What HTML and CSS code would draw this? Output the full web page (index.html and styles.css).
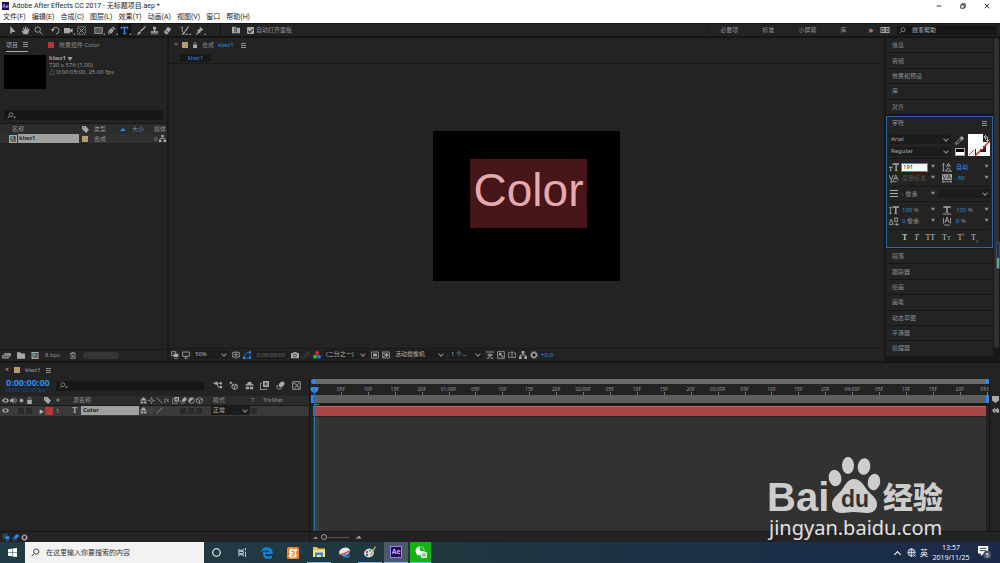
FILE: index.html
```html
<!DOCTYPE html>
<html lang="zh-CN">
<head>
<meta charset="utf-8">
<title>Adobe After Effects CC 2017</title>
<link rel="stylesheet" href="styles.css">
</head>
<body>
<svg class="sprite" aria-hidden="true">
  <symbol id="arrow" viewBox="0 0 12 12"><path d="M3 0v11l3-3h4z" fill="currentColor"/></symbol>
  <symbol id="hand" viewBox="0 0 12 12"><path d="M3.5 11 0.8 6.6l1-.8L4 7.4 2.6 2.5l1-.4L5 5.6 5.2.8h1.2l.3 4.6L8.2 1.3l1 .3L8.5 6l2-2.6 1 .6L9 11z" fill="currentColor"/></symbol>
  <symbol id="zoom" viewBox="0 0 12 12"><circle cx="5" cy="4.8" r="3.6" class="ln"/><path d="m7.6 7.6 3.6 3.6" class="ln"/></symbol>
  <symbol id="rotate" viewBox="0 0 12 12"><path d="M2 5.5A4.4 4.4 0 1 1 6.5 10.500" class="ln"/><path d="M0 4h5L2 7.500z" fill="currentColor"/></symbol>
  <symbol id="video" viewBox="0 0 12 12"><path d="M0 2.500h8v2.500l3.500-2v6L8 7v2.500H0z" fill="currentColor"/></symbol>
  <symbol id="pan" viewBox="0 0 12 12"><rect x="1" y="1" width="10" height="10" class="ln" stroke-dasharray="2 1.300"/><path d="m3 3 6 6M9 3 3 9" class="ln"/></symbol>
  <symbol id="rect" viewBox="0 0 12 12"><rect x="1" y="2" width="10" height="8" fill="#555" stroke="currentColor"/></symbol>
  <symbol id="pen" viewBox="0 0 12 12"><path d="m1 11 1.500-5.500L6 2.800 9 5.700 6.500 9.300zM6.700 2 8 .7l3.200 3L9.800 5z" fill="currentColor"/><path d="m1.500 10.500 4-4" stroke="#222" stroke-width=".8"/></symbol>
  <symbol id="type" viewBox="0 0 12 12"><path d="M1 1h10v3H9.500L9 2.600H7v7.200h1.500V11h-5V9.800H5V2.600H3L2.500 4H1z" fill="currentColor"/></symbol>
  <symbol id="brush" viewBox="0 0 12 12"><path d="M11 0 4 6.200l1.500 1.600L12 1zM3.500 7c2 .6 1.800 2.600.4 3.500S.8 11.500 0 11c1.500-.6.800-3.200 3.500-4z" fill="currentColor"/></symbol>
  <symbol id="stamp" viewBox="0 0 12 12"><path d="M4 1h4v3L7 5v2h4v2H1V7h4V5L4 4zM1 10h10v1H1z" fill="currentColor"/></symbol>
  <symbol id="eraser" viewBox="0 0 12 12"><path d="m1 8 5.500-7L11 4 6 11H4z" fill="currentColor"/><path d="m3 5.500 4.500 3.500" stroke="#222"/></symbol>
  <symbol id="roto" viewBox="0 0 12 12"><path d="m1 3 2-2v7" class="ln"/><path d="M11 0 6 6.500l1.500 1L12 1zM5.500 7 2 11.500c2 .5 4-1 5-3z" fill="currentColor"/><path d="M7 11h4" class="ln"/></symbol>
  <symbol id="pin" viewBox="0 0 12 12"><path d="m6.500 1 4.500 4-1 1-1-.2L7 8v2L5.500 9 2 11.500 1 11l3-3.500L2.500 5.500 5 5l1.500-2z" fill="currentColor"/></symbol>
  <symbol id="folderfx" viewBox="0 0 12 12"><path d="M0 1h5l1 1.500h6V11H0z" fill="currentColor"/><path d="M3 4h1.500v5H3m5-5H6.500v5H8" fill="none" stroke="#222"/></symbol>
  <symbol id="search" viewBox="0 0 12 12"><circle cx="7" cy="4.700" r="3.500" class="ln"/><path d="M4.500 7.300 1 11" class="ln"/></symbol>
  <symbol id="searchmenu" viewBox="0 0 16 12"><circle cx="7" cy="4.700" r="3.500" class="ln"/><path d="M4.500 7.300 1 11" class="ln"/><path d="M11 8h5l-2.500 3z" fill="currentColor"/></symbol>
  <symbol id="ws" viewBox="0 0 12 8"><path d="M0 0h12v8H0z" fill="currentColor"/><path d="M1.500 2h3v4h-3zM7 2h3.500M7 6h3.500M10 2v4M7 4h2" fill="none" stroke="#222"/></symbol>
  <symbol id="lock" viewBox="0 0 12 12"><path d="M2 5h8v7H2z" fill="currentColor"/><path d="M3.800 5V3a2.200 2.200 0 0 1 4.400 0v2" class="ln"/></symbol>
  <symbol id="tag" viewBox="0 0 12 12"><path d="M0 0h6l6 6.500L7 12 0 5z" fill="currentColor"/><circle cx="3" cy="3" r="1" fill="#333"/></symbol>
  <symbol id="comp" viewBox="0 0 12 12"><path d="M0 0h12v12H0z" fill="#aaa"/><path d="M2 2h8v8H2z" fill="#333"/><circle cx="5" cy="4.500" r="2.200" fill="#52a9c8"/><circle cx="7.500" cy="7.500" r="2" fill="#c75151"/><path d="M2 7h3v3H2z" fill="#62a05a"/></symbol>
  <symbol id="tree" viewBox="0 0 12 12"><path d="M4 0h4v4H4zM0 8h4v4H0zM8 8h4v4H8z" fill="currentColor"/><path d="M6 4v2M2 8V6h8v2" class="ln"/></symbol>
  <symbol id="footage" viewBox="0 0 14 10"><path d="M3 1h11v6H3zM0 4h11v6H0z" fill="currentColor" stroke="#222" stroke-width=".7"/><path d="M2 7h7" stroke="#222"/></symbol>
  <symbol id="folder" viewBox="0 0 12 10"><path d="M0 0h5l1 2h6v8H0z" fill="currentColor"/></symbol>
  <symbol id="trash" viewBox="0 0 12 12"><path d="M1 2.500h10M4 2V.7h4V2M2.500 3v8.300h7V3M5 5v4.500M7 5v4.500" class="ln"/></symbol>
  <symbol id="layers" viewBox="0 0 12 12"><path d="M1 1h6v6H1z" class="ln"/><path d="M4 4h7v5H4z" fill="currentColor"/><path d="M5 11h5" class="ln"/></symbol>
  <symbol id="monitor" viewBox="0 0 12 12"><path d="M1 1.500h10v6.500H1zM6 8v2.500M3.500 11h5" class="ln"/></symbol>
  <symbol id="grid" viewBox="0 0 12 12"><path d="M5 9H1V2h4M7 2h4v7H7M6 0v12M3 5.500h6" class="ln"/></symbol>
  <symbol id="mask" viewBox="0 0 12 12"><path d="M2 10.500C1 6 4 2.500 10.500 2v8.500z" class="ln"/><path d="M0 9h3v3H0zM9 9h3v3H9zM9 .5h3v3H9z" fill="currentColor"/></symbol>
  <symbol id="camera" viewBox="0 0 12 12"><path d="M0 3h3l1-1.500h4L9 3h3v8H0z" fill="currentColor"/><circle cx="6" cy="6.700" r="2.200" fill="none" stroke="#222"/></symbol>
  <symbol id="link" viewBox="0 0 12 12"><path d="M1 8a2 2 0 0 0 4 1l1-3M6 6l1-3a2 2 0 0 1 4 1L9 8" class="ln"/></symbol>
  <symbol id="rgb" viewBox="0 0 12 12"><circle cx="6" cy="3" r="3" fill="#e22"/><circle cx="3" cy="8.500" r="3" fill="#2b3"/><circle cx="9" cy="8.500" r="3" fill="#36f"/></symbol>
  <symbol id="roi" viewBox="0 0 12 12"><path d="M.5 1.500h11v9H.5z" class="ln"/><path d="M3 4h6v4H3z" fill="currentColor"/></symbol>
  <symbol id="checker" viewBox="0 0 12 12"><path d="M.5 1.500h11v9H.5z" class="ln"/><path d="M2 3h2v2h2V3h2v2h2v2H8v2H6V7H4v2H2V7h2V5H2z" fill="currentColor"/></symbol>
  <symbol id="align" viewBox="0 0 12 12"><path d="M0 1.500h12M3 5h6v2H3zM1 11h3m4 0h3M4 11l1-3m3 3L7 8" class="ln"/></symbol>
  <symbol id="fast" viewBox="0 0 12 12"><path d="M1 1h10v10H1z" class="ln"/><path d="M3 3h4L6 5l4 4-1 1-4-4-2 1z" fill="currentColor"/></symbol>
  <symbol id="share" viewBox="0 0 12 12"><path d="M3 3H.5v6.500h11V3H9M6 8V1M4 3l2-2 2 2" class="ln"/></symbol>
  <symbol id="gear" viewBox="0 0 12 12"><circle cx="6" cy="6" r="3.500" fill="none" stroke="currentColor" stroke-width="2"/><circle cx="6" cy="6" r="5" fill="none" stroke="currentColor" stroke-width="1.500" stroke-dasharray="2 1.900"/></symbol>
  <symbol id="flow" viewBox="0 0 12 12"><path d="M0 3h5M5 3l2 5h4M5 3h6" class="ln"/><path d="M3 1h3v4H3zM9 1.500h3v3H9zM9 6.500h3v3H9z" fill="currentColor"/></symbol>
  <symbol id="draft" viewBox="0 0 12 12"><path d="m7.500 4 3.500 1.500v4L7.500 11.500 4 9.500v-4zM4 5.500 7.500 7 11 5.500M7.500 7v4" class="ln"/><path d="m2.500 0 .8 1.700L5 2.500l-1.700.8L2.500 5l-.8-1.700L0 2.500l1.700-.8z" fill="currentColor"/></symbol>
  <symbol id="shy" viewBox="0 0 12 12"><path d="M0 6c0-1 2-1.500 3-2 0-4 6-4 6 0 1 .5 3 1 3 2zM1 7.500h4.500v3.500H1zM6.500 7.500H11v3.500H6.500z" fill="currentColor"/></symbol>
  <symbol id="blend" viewBox="0 0 12 12"><path d="M4 0h8v8H4z" fill="currentColor"/><path d="M2.500 3H.5v8.500h8V9.500" class="ln"/><path d="M6 2h4v4H6z" fill="#555"/></symbol>
  <symbol id="blur" viewBox="0 0 12 12"><ellipse cx="7.500" cy="4.500" rx="4.400" ry="3" transform="rotate(-45 7.500 4.500)" fill="currentColor"/><path d="M2.500 5c-2 2-2 5 .5 5.500S7 10 8.500 9" class="ln"/></symbol>
  <symbol id="graph" viewBox="0 0 12 12"><path d="M1 1h10v10H1zM2 3c5 0 4 6 9 7M3 10 9 3" class="ln"/></symbol>
  <symbol id="eye" viewBox="0 0 12 12"><path d="M0 6c3-5 9-5 12 0-3 5-9 5-12 0z" fill="currentColor"/><circle cx="6" cy="6" r="2.200" fill="#222"/></symbol>
  <symbol id="speaker" viewBox="0 0 12 12"><path d="M0 4h2.500L6 1v10L2.500 8H0z" fill="currentColor"/><path d="M7.500 3.500q2 2.500 0 5M9.500 1.500q3.500 4.500 0 9" class="ln"/></symbol>
  <symbol id="dot" viewBox="0 0 12 12"><circle cx="6" cy="6" r="3.200" fill="currentColor"/></symbol>
  <symbol id="sun" viewBox="0 0 12 12"><circle cx="6" cy="6" r="2.500" class="ln"/><path d="M6 0v2.500M6 9.500V12M0 6h2.500M9.500 6H12" class="ln"/></symbol>
  <symbol id="slash" viewBox="0 0 12 12"><path d="m1 11 10-10" class="ln"/></symbol>
  <symbol id="back" viewBox="0 0 12 12"><path d="m1 1 10 10" class="ln"/></symbol>
  <symbol id="half" viewBox="0 0 12 12"><circle cx="6" cy="6" r="5" class="ln"/><path d="M2.500 9.500A5 5 0 0 1 9.500 2.500z" fill="currentColor"/></symbol>
  <symbol id="cube" viewBox="0 0 12 12"><path d="m6 .7 5 2.500v5.600l-5 2.500-5-2.500V3.200zM1 3.200l5 2.600 5-2.600M6 5.800v5.500" class="ln"/></symbol>
  <symbol id="dropper" viewBox="0 0 12 12"><path d="m1 11 .5-2.500 5-5 2 2-5 5z" class="ln"/><path d="m6 2 1-.5L9 0l3 3-1.500 2-.5 1z" fill="currentColor"/></symbol>
  <symbol id="size" viewBox="0 0 14 12"><path d="M5 0h9v3h-1V2h-2v8h1v1H8v-1h1V2H6v1H5zM0 5h5v2H4V6.500H3V10h1v1H1v-1h1V6.500H1V7H0z" fill="currentColor"/></symbol>
  <symbol id="leading" viewBox="0 0 14 12"><path d="M2 0v11M.5 2 2 .5 3.500 2M.5 9.500 2 11l1.500-1.500M6 5l3-5 3 5M7 3.500h4M5 11.500l3.500-5.500 4 5.500M5 11h9" class="ln"/></symbol>
  <symbol id="kern" viewBox="0 0 14 12"><path d="m0 1 3 7 3-7M6 9l3.500-8L13 9M7.500 6h4M3 10.500h8M4 9l-2 1.500L4 12" class="ln"/></symbol>
  <symbol id="track" viewBox="0 0 14 12"><path d="M0 0h14v8H0z" fill="currentColor"/><path d="m1 1 2.500 6L6 1m1 6 2.500-6L13 7M8 5h4" fill="none" stroke="#222"/><path d="M0 10.500h14M2 9l-2 1.500L2 12m10-3 2 1.500-2 1.500" class="ln"/></symbol>
  <symbol id="vscale" viewBox="0 0 14 12"><path d="M5 0h9v3h-1V2h-2.500v8h1v1h-4v-1h1V2H6v1H5z" fill="currentColor"/><path d="M2 1v10M.5 2.500 2 1l1.500 1.500M.5 9.500 2 11l1.500-1.500" class="ln"/></symbol>
  <symbol id="hscale" viewBox="0 0 14 12"><path d="M2 0h10v3h-1V2H8v6h1v1H5V8h1V2H3v1H2z" fill="currentColor"/><path d="M1 11h12" class="ln"/></symbol>
  <symbol id="bshift" viewBox="0 0 14 12"><path d="m0 10 3-7 3 7zM8 6V1h4v5zM8 10h6M11 8v4" class="ln"/></symbol>
  <symbol id="tsume" viewBox="0 0 14 12"><path d="M4 8 7 0l3 8M5 5h4M2 1v8M12 1v8M3 11h8" class="ln"/></symbol>
  <symbol id="win" viewBox="0 0 12 12"><path d="m0 1.700 5.300-.8v4.800H0zM6 .8 12 0v5.700H6zM0 6.300h5.300v4.800L0 10.300zM6 6.300h6V12l-6-.8z" fill="#fff"/></symbol>
  <symbol id="task" viewBox="0 0 12 12"><path d="M1 1v2h6V1M1 11V9h6v2M1 4.500h6v3H1zM10 0v3M10 5v7" class="ln"/></symbol>
  <symbol id="edge" viewBox="0 0 12 12"><path d="M0 6C.5 2 3 .3 6.200.3 10 .3 12 3 11.700 7H4c.2 3 4.500 3 7 1.500v2.500c-4.500 2-9 .5-9-4C2 5 3.500 3.500 5 3 2.500 3 1 4.500 0 6zm4-.8h4.500C8.300 2.500 4.500 2.700 4 5.200z" fill="#1684dd"/></symbol>
  <symbol id="uc" viewBox="0 0 12 12"><rect width="12" height="12" rx="1.500" fill="#f5821f"/><path d="M3 3.500C2 2 4 1 5.500 2S9 1 10 2.500 8.500 4 9 6s1.500 4-1 4.500-5 .5-6-1 1-1.500.5-3.500S2 4.500 3 3.500z" fill="#fff"/><path d="M4 4.500c2-1 3 0 3.500 1S6 7 5 6.500M4 8.500c1.500.5 2.500.5 3.500-.5" stroke="#f5821f" stroke-width="1.200" fill="none"/></symbol>
  <symbol id="explorer" viewBox="0 0 12 12"><path d="M0 1h4l1 1.500h7V11H0z" fill="#f5bf4d"/><path d="M0 4h12v7H0z" fill="#ffe08a"/><path d="M2 6.500h8V11H8V9H4v2H2z" fill="#3b8cca"/></symbol>
  <symbol id="snip" viewBox="0 0 12 12"><ellipse cx="6.500" cy="4.500" rx="5.500" ry="3.800" fill="#ebe7e6" transform="rotate(-20 6.500 4.500)"/><path d="M1 7.500Q6 8 11 4" fill="none" stroke="#c33" stroke-width="1.300"/><path d="m5.500 7 4 3.500M9 7l-3.500 3.500" stroke="#4a8cc4" stroke-width="1.300"/><circle cx="10" cy="8.500" r="1.500" fill="none" stroke="#4a8cc4"/></symbol>
  <symbol id="paint" viewBox="0 0 12 12"><ellipse cx="5" cy="7" rx="5" ry="4.300" fill="#d8e4ea" transform="rotate(-20 5 7)"/><circle cx="3" cy="6" r="1.200" fill="#d34"/><circle cx="6" cy="4.700" r="1.100" fill="#3a5"/><circle cx="3" cy="9" r="1.200" fill="#36c"/><path d="m11 0 1 1-5 9-1-1z" fill="#d79a45"/></symbol>
  <symbol id="wechat" viewBox="0 0 12 12"><circle cx="5" cy="5" r="4.500" fill="#fff"/><path d="M5 5V1a4 4 0 0 1 4 4z" fill="#10bd12"/><rect x="6" y="6" width="6" height="6" rx="1" fill="#e8f4e8"/><path d="M8 7.500v3M10 7.500v3" stroke="#2a9b2a"/></symbol>
  <symbol id="globe" viewBox="0 0 12 12"><g fill="none" stroke="currentColor" stroke-width=".9"><circle cx="6" cy="6" r="5"/><path d="M1 6h10M6 1v10"/><ellipse cx="6" cy="6" rx="2.500" ry="5"/></g><path d="M7.500 7.500H12V12H7.500z" fill="#1c2c46"/><path d="m8 8 3.500 3.500M11.500 8 8 11.500" stroke="currentColor" stroke-width=".9"/></symbol>
  <symbol id="note" viewBox="0 0 14 14"><path d="M0 0h11v8H6l-3 3V8H0z" fill="#fff"/><path d="M2 2.500h7M2 5h7" stroke="#1c2c46"/><circle cx="10" cy="9.500" r="4.300" fill="#4a566b"/></symbol>
  <symbol id="mount" viewBox="0 0 12 8"><path d="m0 7 3-3 1 1 3-4 5 6z" fill="currentColor"/></symbol>
  <symbol id="keys" viewBox="0 0 12 12"><path d="m0 6 5-5v3h3V1l4 3v6H8V8H5v3z" fill="currentColor"/><path d="m3 6 2-1v2z" fill="#222"/></symbol>
</svg>

<header>
  <div class="titlebar">
    <span class="ae-logo">Ae</span>
    <span class="title">Adobe After Effects CC 2017 - 无标题项目.aep *</span>
    <div class="winbtns">
      <button aria-label="最小化"><svg viewBox="0 0 8 8"><path d="M1 4h6" class="ln"/></svg></button>
      <button aria-label="还原"><svg viewBox="0 0 8 8"><path d="M1 2.500h4.500V7H1zM2.500 2.500V1H7v4.500H5.500" class="ln"/></svg></button>
      <button aria-label="关闭"><svg viewBox="0 0 8 8"><path d="m1 1 6 6M7 1 1 7" class="ln"/></svg></button>
    </div>
  </div>
  <nav class="menubar">
    <button>文件(F)</button><button>编辑(E)</button><button>合成(C)</button><button>图层(L)</button><button>效果(T)</button><button>动画(A)</button><button>视图(V)</button><button>窗口</button><button>帮助(H)</button>
  </nav>
</header>

<div class="toolbar">
  <div class="tools"><button aria-label="选取"><svg><use href="#arrow"/></svg></button><button aria-label="手形"><svg><use href="#hand"/></svg></button><button aria-label="缩放"><svg><use href="#zoom"/></svg></button></div>
  <div class="tools"><button aria-label="旋转"><svg><use href="#rotate"/></svg></button><button class="more" aria-label="摄像机"><svg><use href="#video"/></svg></button><button aria-label="锚点"><svg><use href="#pan"/></svg></button></div>
  <div class="tools"><button class="more" aria-label="矩形"><svg><use href="#rect"/></svg></button><button class="more" aria-label="钢笔"><svg><use href="#pen"/></svg></button><button class="more active" aria-label="文字"><svg><use href="#type"/></svg></button></div>
  <div class="tools"><button aria-label="画笔"><svg><use href="#brush"/></svg></button><button aria-label="图章"><svg><use href="#stamp"/></svg></button><button aria-label="橡皮擦"><svg><use href="#eraser"/></svg></button></div>
  <div class="tools wide"><button class="more" aria-label="Roto"><svg><use href="#roto"/></svg></button><button class="more" aria-label="操控点"><svg><use href="#pin"/></svg></button></div>
  <div class="panel-toggle"><svg><use href="#folderfx"/></svg><label><input type="checkbox" checked>自动打开面板</label></div>
  <div class="workspaces"><button>必要项</button><button>标准</button><button>小屏幕</button><button>库</button><button class="bright">»</button></div>
  <svg class="ws"><use href="#ws"/></svg>
  <div class="help"><svg><use href="#search"/></svg><input type="text" placeholder="搜索帮助" aria-label="搜索帮助"></div>
</div>

<main class="main">
  <section class="project">
    <div class="tabs"><button class="tab on">项目 <i class="burger"></i></button><button class="tab"><i class="sq red"></i>效果控件 Color</button></div>
    <div class="info"><div class="thumb"></div><div><b>klwz1 <small>▼</small></b><p>720 x 576 (1.00)</p><p>△ 0:00:05:00, 25.00 fps</p></div></div>
    <div class="search"><svg><use href="#searchmenu"/></svg><input type="text" aria-label="搜索项目"></div>
    <div class="files">
      <div class="frow fhead"><span class="fname">名称</span><svg><use href="#tag"/></svg><span>类型</span><i class="up"></i><span>大小</span><span>媒体</span></div>
      <div class="frow fsel"><svg class="ci"><use href="#comp"/></svg><span class="sel">klwz1</span><i class="sq tan"></i><span>合成</span><i></i><span></span><span class="zero">0<svg><use href="#tree"/></svg></span></div>
    </div>
    <div class="pfoot"><svg class="w"><use href="#footage"/></svg><svg><use href="#folder"/></svg><svg><use href="#comp"/></svg><span>8 bpc</span><svg><use href="#trash"/></svg><i class="thumbbar"></i></div>
  </section>

  <section class="viewer">
    <div class="tabs vtabs"><span class="x">×</span><i class="sq tan"></i><svg><use href="#lock"/></svg><span>合成</span><span class="blue">klwz1</span><i class="burger"></i></div>
    <div class="crumb"><button>klwz1</button></div>
    <div class="stage"><div class="frame"><div class="textlayer">Color</div></div></div>
    <div class="vfoot">
      <svg><use href="#layers"/></svg><svg><use href="#monitor"/></svg>
      <label class="sel-wrap zoomsel"><select aria-label="放大率"><option>50%</option></select></label>
      <svg><use href="#grid"/></svg><svg class="blue"><use href="#mask"/></svg>
      <span class="tc">0:00:00:00</span>
      <svg><use href="#camera"/></svg><svg class="dim"><use href="#link"/></svg><svg><use href="#rgb"/></svg>
      <label class="sel-wrap res"><select aria-label="分辨率"><option>(二分之一)</option></select></label>
      <svg><use href="#roi"/></svg><svg><use href="#checker"/></svg>
      <label class="sel-wrap cam"><select aria-label="视图"><option>活动摄像机</option></select></label>
      <label class="sel-wrap cnt"><select aria-label="视图布局"><option>1 个...</option></select></label>
      <svg><use href="#align"/></svg><svg><use href="#fast"/></svg><svg><use href="#share"/></svg><svg><use href="#tree"/></svg><svg><use href="#gear"/></svg>
      <span class="blue">+0.0</span>
    </div>
  </section>

  <aside class="side">
    <div class="stack">
      <button class="acc">信息</button><button class="acc">音频</button><button class="acc">效果和预设</button><button class="acc">库</button><button class="acc">对齐</button>
      <div class="char">
        <div class="chead"><span>字符</span><i class="burger"></i></div>
        <div class="fonts">
          <div class="fsels">
            <label class="sel-wrap"><select aria-label="字体"><option>Arial</option></select></label>
            <label class="sel-wrap"><select aria-label="样式"><option>Regular</option></select></label>
          </div>
          <div class="pick"><svg><use href="#dropper"/></svg><i class="bw"></i></div>
          <svg class="swatch" viewBox="0 0 22 22"><path d="M8 8h14v14H8z" fill="#fff"/><path d="M12 12h6v6h-6z" fill="#222"/><path d="M0 15h7v7H0z" fill="#fff"/><path d="m1 21 5-5" stroke="#d33"/><path d="M7 22 22 7" stroke="#d22" stroke-width="1.500"/><path d="M0 0h15v15H0z" fill="#fff"/><path d="M16 3h3.500v4M18 1l-2 2 2 2M17.500 5.500l2 2 2-2" fill="none" stroke="#bbb"/></svg>
        </div>
        <div class="props">
          <svg><use href="#size"/></svg><input type="text" value="191" aria-label="字体大小"><b>▼</b><svg><use href="#leading"/></svg><span class="blue">自动</span><b>▼</b>
          <svg><use href="#kern"/></svg><span class="dim">度量标准</span><b>▼</b><svg><use href="#track"/></svg><span class="blue">-50</span><b>▼</b>
        </div>
        <div class="stroke"><i class="lines"></i><span><em>-</em> 像素</span><b>▼</b><label class="sel-wrap"><select aria-label="描边方式"><option></option></select></label></div>
        <div class="props">
          <svg><use href="#vscale"/></svg><span><em>100</em> %</span><b>▼</b><svg><use href="#hscale"/></svg><span><em>100</em> %</span><b>▼</b>
          <svg><use href="#bshift"/></svg><span><em>0</em> 像素</span><b>▼</b><svg><use href="#tsume"/></svg><span><em>0</em> %</span><b>▼</b>
        </div>
        <div class="faux"><button><b>T</b></button><button><i>T</i></button><button>TT</button><button>T<small>T</small></button><button>T<sup>1</sup></button><button>T<sub>1</sub></button></div>
      </div>
      <button class="acc">段落</button><button class="acc">跟踪器</button><button class="acc">绘画</button><button class="acc">画笔</button><button class="acc">动态草图</button><button class="acc">平滑器</button><button class="acc">摇摆器</button>
    </div>
    <div class="sbar"><i class="sthumb"></i><i class="meter"></i></div>
  </aside>
</main>

<section class="timeline">
  <div class="tabs ttabs"><span class="x">×</span><i class="sq tan"></i><span>klwz1</span><i class="burger"></i></div>
  <div class="tl">
    <div class="tleft">
      <div class="tctl">
        <div class="now"><b>0:00:00:00</b><small>00000 (25.00 fps)</small></div>
        <div class="search"><svg><use href="#searchmenu"/></svg><input type="text" aria-label="搜索图层"></div>
        <div class="ticons"><svg><use href="#flow"/></svg><svg><use href="#draft"/></svg><svg><use href="#shy"/></svg><svg><use href="#blend"/></svg><svg><use href="#blur"/></svg><svg><use href="#graph"/></svg></div>
      </div>
      <div class="lrow lhead"><svg><use href="#eye"/></svg><svg><use href="#speaker"/></svg><svg><use href="#dot"/></svg><svg><use href="#lock"/></svg><span></span><svg><use href="#tag"/></svg><span>#</span><span></span><span class="src">源名称</span><svg><use href="#shy"/></svg><svg><use href="#sun"/></svg><svg><use href="#back"/></svg><em>fx</em><svg><use href="#blend"/></svg><svg><use href="#blur"/></svg><svg><use href="#half"/></svg><svg><use href="#cube"/></svg><span class="mode">模式</span><span>T</span><span class="trk">TrkMat</span></div>
      <div class="lrow layer"><svg><use href="#eye"/></svg><span></span><i class="bx"></i><i class="bx"></i><span class="tri">▶</span><i class="lab"></i><span>1</span><b>T</b><strong>Color</strong><svg><use href="#shy"/></svg><svg class="dim"><use href="#sun"/></svg><svg><use href="#slash"/></svg><span></span><span></span><i class="bx"></i><i class="bx"></i><i class="bx"></i><label class="sel-wrap"><select aria-label="模式"><option>正常</option></select></label><i class="bx"></i><span></span></div>
    </div>
    <div class="tright">
      <div class="nav"></div>
      <div class="ruler"><span>:00F</span><span>05F</span><span>10F</span><span>15F</span><span>20F</span><span>01:00F</span><span>05F</span><span>10F</span><span>15F</span><span>20F</span><span>02:00F</span><span>05F</span><span>10F</span><span>15F</span><span>20F</span><span>03:00F</span><span>05F</span><span>10F</span><span>15F</span><span>20F</span><span>04:00F</span><span>05F</span><span>10F</span><span>15F</span><span>20F</span><span>05:00</span></div>
      <div class="work"></div>
      <div class="cache"></div>
      <div class="bar"></div>
      <div class="empty"></div>
      <svg class="head" viewBox="0 0 8 8"><path d="M0 0h8v4L4 8 0 4z" fill="#2d8ceb"/></svg>
    </div>
    <div class="tend"><svg viewBox="0 0 8 8"><path d="M0 0h8v5L4 8 0 5z" fill="#aaa"/></svg><svg><use href="#keys"/></svg></div>
  </div>
  <div class="tfoot"><div class="tf-l"><svg class="blue"><use href="#layers"/></svg><svg class="blue"><use href="#blur"/></svg><svg><use href="#gear"/></svg></div><svg class="m1"><use href="#mount"/></svg><input type="range" min="0" max="100" value="0" aria-label="时间缩放"><svg class="m2"><use href="#mount"/></svg></div>
</section>

<footer class="taskbar">
  <button class="start" aria-label="开始"><svg><use href="#win"/></svg></button>
  <div class="tsearch"><svg><use href="#search"/></svg><input type="text" placeholder="在这里输入你要搜索的内容" aria-label="搜索"></div>
  <div class="sys"><button aria-label="Cortana"><svg viewBox="0 0 12 12"><circle cx="6" cy="6" r="5" fill="none" stroke="#fff" stroke-width="1.500"/></svg></button><button aria-label="任务视图"><svg><use href="#task"/></svg></button></div>
  <div class="apps"><button aria-label="Edge"><svg><use href="#edge"/></svg></button><button aria-label="UC"><svg><use href="#uc"/></svg></button><button class="run" aria-label="资源管理器"><svg><use href="#explorer"/></svg></button><button aria-label="截图"><svg><use href="#snip"/></svg></button><button class="run" aria-label="画图"><svg><use href="#paint"/></svg></button><button class="run cur"><span class="aeicon">Ae</span></button><button class="run wx" aria-label="微信"><svg><use href="#wechat"/></svg></button></div>
  <div class="tray"><i class="caret"></i><svg><use href="#globe"/></svg><span>英</span><time>13:57<br>2019/11/25</time><div class="notif"><svg><use href="#note"/></svg><span>5</span></div></div>
</footer>

<svg class="watermark" viewBox="0 0 186 90" role="img" aria-label="Baidu">
  <g fill="#cdcdcd">
    <text x="-1" y="61" class="wm-bai">Bai</text>
    <ellipse cx="67" cy="28" rx="6.300" ry="8.300" transform="rotate(-12 67 28)"/>
    <ellipse cx="80" cy="15.500" rx="6" ry="8.400"/>
    <ellipse cx="96" cy="16.500" rx="6.300" ry="8.400" transform="rotate(8 96 16.500)"/>
    <ellipse cx="106" cy="32" rx="6.200" ry="8.300" transform="rotate(12 106 32)"/>
    <path d="M86 29c7 0 10 7 14 12 5 5 9 8 9 13 0 6-4 9-10 9-5 0-8-1-13-1s-8 1-12 1c-6 0-10-3-10-9 0-5 5-9 9-13 4-5 6-12 13-12z"/>
    <text x="115" y="58" class="wm-cjk">经验</text>
    <text x="1" y="85" class="wm-url">jingyan.baidu.com</text>
  </g>
  <text x="73" y="57" class="wm-du">du</text>
</svg>
</body>
</html>
```
FILE: styles.css
```css
*, *::before, *::after { box-sizing: border-box; }
body {
  margin: 0; height: 100vh; min-height: 560px; display: flex; flex-direction: column; overflow: hidden; position: relative;
  background: #171717; color: #8f8f8f;
  font: 6px/8px "Noto Sans", "Noto Sans CJK SC", sans-serif;
}
button, input, select { font: inherit; color: inherit; background: none; border: 0; padding: 0; margin: 0; outline: 0; min-width: 0; }
button { cursor: pointer; }
p { margin: 0; }
svg { width: 8px; height: 8px; display: block; flex: none; color: #a8a8a8; }
.sprite { position: absolute; width: 0; height: 0; }
.ln { fill: none; stroke: currentColor; stroke-width: 1.2; }
.blue { color: #2d8ceb; }
.dim { color: #505050; }
em { font-style: normal; color: #2d8ceb; }
.sq { width: 6px; height: 6px; flex: none; }
.red { background: #b8383a; }
.tan { background: #b59d72; }
.burger { display: inline-block; width: 5px; height: 5px; border: solid #8f8f8f; border-width: 1px 0; position: relative; }
.burger::after { content: ""; position: absolute; left: 0; right: 0; top: 1px; height: 1px; background: #8f8f8f; }

/* window header */
header { background: #fff; color: #222; height: 23px; flex: none; font-family: Roboto, "Noto Sans CJK SC", sans-serif; }
.titlebar { height: 12px; display: flex; align-items: center; padding-left: 2px; font-size: 7px; }
.ae-logo { width: 7px; height: 8px; background: #1f0a4f; color: #b59cf5; font: bold 5px/8px "Open Sans", sans-serif; text-align: center; margin-right: 3px; }
.winbtns { margin-left: auto; display: flex; padding-right: 1px; }
.winbtns button { width: 24px; display: flex; justify-content: center; }
.winbtns svg { width: 6px; height: 6px; color: #222; }
.menubar { display: flex; gap: 6px; padding-left: 3px; font-size: 7px; line-height: 10px; }

/* toolbar */
.toolbar { height: 15px; flex: none; background: #232323; border: solid #151515; border-width: 1px 0 2px; display: flex; align-items: center; padding-left: 6px; }
.tools { display: flex; margin-right: 4px; }
.tools button { width: 13px; height: 12px; display: grid; place-items: center; position: relative; }
.tools svg { width: 9px; height: 9px; }
.tools.wide { gap: 2px; }
.more::after { content: ""; position: absolute; right: 0; bottom: 1px; border: 1px solid; border-color: transparent #999 #999 transparent; }
.tools .active { background: #121212; }
.tools .active svg { color: #2d8ceb; }
.panel-toggle { display: flex; align-items: center; gap: 7px; margin-left: 10px; padding-left: 11px; border-left: 1px solid #151515; height: 12px; }
.panel-toggle label { display: flex; align-items: center; gap: 2px; }
input[type=checkbox] { appearance: none; width: 7px; height: 7px; background: #aaa; border-radius: 1px; display: grid; place-items: center; }
input[type=checkbox]::after { content: ""; width: 5px; height: 3px; border: solid #222; border-width: 0 0 1px 1px; transform: rotate(-45deg); }
.workspaces { margin-left: auto; display: flex; align-items: center; border-left: 1px solid #151515; padding-left: 12px; gap: 24px; }
.workspaces .bright { color: #ccc; font-size: 9px; margin-left: -2px; }
.ws { width: 10px; height: 6px; margin: 0 7px; }
.help { width: 100px; height: 9px; background: #161616; display: flex; align-items: center; gap: 6px; padding-left: 2px; margin-right: 3px; color: #b5b5b5; }
.help svg { width: 7px; height: 7px; }
.help input { width: 80px; }
::placeholder { color: inherit; opacity: 1; }

/* main panels */
.main { flex: 324 1 0; min-height: 0; display: grid; grid-template-columns: 167px 1fr 114px; column-gap: 2px; }
.project, .viewer { background: #232323; display: flex; flex-direction: column; min-width: 0; min-height: 0; }
.tabs { display: flex; align-items: center; height: 14px; flex: none; }
.project .tabs { padding-left: 6px; gap: 20px; }
.tab { height: 13px; display: flex; align-items: center; gap: 5px; }
.tab.on { border-bottom: 1px solid #aaa; color: #aaa; }
.info { display: flex; gap: 3px; padding: 3px 4px; height: 58px; line-height: 7px; color: #a0a0a0; font-family: "Open Sans", "Noto Sans CJK SC", sans-serif; }
.info small { font-size: 5px; }
.thumb { width: 42px; height: 34px; background: #000; }
.search { display: flex; align-items: center; height: 10px; background: #161616; border: 1px solid #1b1b1b; padding-left: 2px; }
.search svg { width: 9px; height: 7px; }
.search input { width: 100%; }
.project .search { margin: 0 4px 3px; }
.files { flex: 1; border-top: 1px solid #151515; }
.frow { display: grid; grid-template-columns: 9px 61px 15px 26px 12px 22px 1fr; align-items: center; height: 9px; padding-left: 9px; white-space: nowrap; overflow: hidden; }
.frow svg { width: 7px; height: 7px; }
.fhead { background: #2c2c2c; height: 10px; }
.fname { grid-column: 1 / 3; padding-left: 3px; }
.fhead svg, .fsel .sq { margin-left: 3px; }
.frow .ci { width: 8px; height: 8px; }
.up { border: 3px solid transparent; border-bottom-color: #2d8ceb; border-top: 0; width: 6px; }
.fsel { background: #303030; }
.sel { background: #a0a0a0; color: #222; line-height: 9px; padding-left: 1px; font-weight: 600; }
.zero { display: flex; gap: 2px; align-items: center; }
.pfoot { height: 12px; display: flex; align-items: center; gap: 6px; padding-left: 2px; border-top: 1px solid #191919; }
.pfoot svg { width: 8px; height: 7px; }
.pfoot .w { width: 9px; }
.thumbbar { width: 36px; height: 7px; border-radius: 4px; background: #353535; }
.pfoot span { margin-right: 3px; }

.vtabs { padding-left: 5px; gap: 4px; }
.x { font-size: 7px; }
.vtabs svg { width: 6px; height: 6px; }
.vtabs .burger { margin-left: 3px; }
.crumb { height: 12px; flex: none; padding: 2px 11px; border-bottom: 1px solid #191919; }
.crumb button { display: block; background: #181818; color: #2d8ceb; width: 31px; line-height: 8px; }
.stage { flex: 1; min-height: 0; display: grid; place-items: center; }
.frame { width: 187px; height: 150px; background: #000; padding: 28px 33px 53px 37px; }
.textlayer { height: 69px; background: #461618; color: #e5aaae; font: 46px/62px "Liberation Sans", sans-serif; text-align: center; }
.vfoot { height: 13px; flex: none; border-top: 1px solid #191919; display: flex; align-items: center; gap: 3px; padding-left: 2px; white-space: nowrap; }
.sel-wrap { display: block; position: relative; background: #1c1c1c; height: 9px; color: #b0b0b0; }
.sel-wrap select { appearance: none; width: 100%; height: 9px; line-height: 9px; display: block; padding: 0 8px 0 2px; }
.sel-wrap::after { content: ""; position: absolute; right: 3px; top: 2px; width: 4px; height: 4px; border: solid #8f8f8f; border-width: 0 1px 1px 0; transform: rotate(45deg); pointer-events: none; }
.zoomsel { width: 36px; }
.tc { background: #1c1c1c; color: #707070; width: 34px; text-align: center; }
.res { width: 44px; }
.cam { width: 53px; }
.cnt { width: 34px; }

/* right column */
.side { display: flex; background: #171717; min-height: 0; }
.stack { flex: 1; display: flex; flex-direction: column; padding-bottom: 4px; }
.acc { flex: 1; background: #232323; text-align: left; padding-left: 6px; border-bottom: 1px solid #161616; display: flex; align-items: center; }
.sbar { width: 7px; padding-left: 1px; position: relative; }
.sthumb { display: block; width: 5px; height: 96%; background: #303030; border-radius: 3px; }
.meter { position: absolute; right: 0; top: 204px; width: 4px; height: 27px; border: 1px solid #3a4a66; background: linear-gradient(#26304a 60%, #54b86a 60%); }
.char { background: #232323; border: 1px solid #2c64a8; flex: none; height: 132px; margin: 1px 0; padding: 0 2px; }
.chead { display: flex; justify-content: space-between; align-items: center; height: 13px; padding: 0 3px; color: #a5a5a5; }
.fonts { display: flex; gap: 3px; padding: 4px 0 2px; border-bottom: 1px solid #191919; height: 29px; }
.fsels { width: 62px; display: flex; flex-direction: column; gap: 3px; padding-top: 1px; }
.pick { width: 11px; display: flex; flex-direction: column; gap: 3px; align-items: center; padding-top: 2px; }
.pick svg { width: 9px; height: 9px; }
.bw { width: 10px; height: 8px; border: 1px solid #aaa; background: linear-gradient(#000 50%, #fff 50%); }
.swatch { width: 22px; height: 22px; }
.props { display: grid; grid-template-columns: 12px 27px 14px 13px 1fr 7px; grid-auto-rows: 11px; align-items: center; padding: 3px 0 2px; border-bottom: 1px solid #191919; white-space: nowrap; }
.props svg { width: 10px; height: 9px; }
.props > span { padding-left: 1px; }
.props b, .stroke b { font-size: 4px; font-weight: 400; text-align: center; padding-right: 4px; }
.props b:nth-child(6n) { padding: 0; }
.props input { background: #fff; color: #111; height: 9px; width: 27px; border: 1px solid #2d8ceb; padding-left: 1px; }
.stroke { display: grid; grid-template-columns: 12px 27px 11px 1fr; align-items: center; height: 15px; border-bottom: 1px solid #191919; }
.stroke b { padding-right: 1px; }
.stroke span { padding-left: 1px; }
.lines { width: 8px; height: 7px; margin-left: 1px; border: solid #aaa; border-width: 1px 0; background: linear-gradient(transparent 2px, #aaa 2px 3px, transparent 3px); }
.faux { display: flex; justify-content: space-between; padding: 3px 12px 0 13px; font: 8px/9px "Liberation Serif", serif; color: #c0c0c0; }
.faux small { font-size: 6px; }
.faux sup, .faux sub { font-size: 4px; line-height: 0; }

/* timeline */
.timeline { flex: 180 1 0; min-height: 0; display: flex; flex-direction: column; background: #232323; border-top: 2px solid #151515; }
.ttabs { padding-left: 5px; gap: 5px; height: 15px; color: #aaa; }
.tl { flex: 1; min-height: 0; display: grid; grid-template-columns: 310px 1fr 11px; }
.tleft { border-right: 1px solid #151515; }
.tctl { height: 18px; display: flex; padding-left: 6px; }
.now { width: 50px; display: flex; flex-direction: column; color: #2d8ceb; white-space: nowrap; }
.now b { font: bold 9px/9px "Open Sans", sans-serif; }
.now small { font-size: 5px; line-height: 7px; color: #1c4f86; }
.tctl .search { width: 148px; margin-top: 3px; }
.ticons { flex: 1; display: flex; justify-content: space-between; padding: 3px 8px 0 9px; }
.ticons svg { width: 9px; height: 9px; }
.lrow { display: grid; grid-template-columns: repeat(4, 8px) 10px 10px 9px 17px 60px repeat(8, 8px) 47px 10px 1fr; align-items: center; height: 10px; padding-left: 2px; white-space: nowrap; }
.lrow svg { width: 7px; height: 7px; }
.lhead { background: #2c2c2c; border-bottom: 1px solid #191919; }
.lhead em { color: #a8a8a8; font: italic 7px/8px "Liberation Serif", serif; }
.src { margin-left: -7px; }
.mode { padding-left: 9px; }
.trk { padding-left: 2px; }
.lrow > :nth-child(7) { padding-left: 2px; }
.layer { background: #3a3a3a; color: #b5b5b5; }
.bx { width: 6px; height: 6px; background: #2a2a2a; }
.tri { font-size: 5px; padding-left: 5px; }
.lab { width: 8px; height: 8px; background: #b8383a; margin-left: 1px; }
.layer > b { font: bold 8px/9px "Liberation Serif", serif; padding-left: 9px; }
.layer strong { background: #a0a0a0; color: #222; line-height: 9px; padding-left: 2px; margin: 0 1px; }
.layer .sel-wrap { margin-left: 7px; width: 39px; }
.tright { position: relative; display: flex; flex-direction: column; padding-left: 3px; min-width: 0; }
.nav { height: 5px; margin-top: 1px; background: #6b6b6b; border: solid #2d8ceb; border-width: 0 3px 0 4px; border-radius: 3px 1px 1px 3px; margin-left: -2px; }
.ruler { height: 11px; display: flex; justify-content: space-between; margin-left: -3px; padding: 2px 2px 0 4px; font-size: 5px; line-height: 7px; color: #999; overflow: hidden; }
.ruler span { width: 0; display: flex; justify-content: center; position: relative; }
.ruler span::after { content: ""; position: absolute; top: 6px; left: 0; width: 1px; height: 3px; background: #777; }
.work { height: 8px; background: #5f5f5f; border: solid #2d8ceb; border-width: 0 3px 0 2px; margin-left: -2px; }
.cache { height: 3px; background: linear-gradient(#2cae2c, #2cae2c) 1px 1px / 5px 1px no-repeat #1a1a1a; }
.bar { height: 10px; background: #a84646; border-top: 1px solid #c76a6a; margin-right: 3px; }
.empty { flex: 1; background: linear-gradient(90deg, #3e3e3e 6px, #323232 6px); border-top: 1px solid #222; margin-right: 3px; }
.tright::after { content: ""; position: absolute; left: 4px; top: 10px; bottom: 0; width: 1px; background: #2d6fb4; }
.head { position: absolute; left: 1px; top: 9px; width: 7px; height: 7px; }
.tend { padding-top: 18px; display: flex; flex-direction: column; align-items: center; gap: 4px; border-left: 1px solid #151515; }
.tend svg { width: 7px; height: 7px; }
.tfoot { height: 11px; flex: none; display: flex; align-items: center; border-top: 1px solid #171717; }
.tf-l { width: 310px; padding-left: 3px; display: flex; gap: 2px; border-right: 1px solid #151515; }
.tf-l svg { width: 7px; height: 7px; }
.m1 { width: 5px; height: 3px; margin: 0 3px; }
.m2 { width: 9px; height: 4px; margin-left: 5px; }
input[type=range] { appearance: none; width: 28px; height: 6px; background: linear-gradient(#555, #555) 0 3px / 100% 1px no-repeat; }
input[type=range]::-webkit-slider-thumb { appearance: none; width: 6px; height: 6px; border: 1px solid #999; border-radius: 50%; background: #232323; }

/* taskbar */
.taskbar { height: 21px; flex: none; display: flex; background: linear-gradient(90deg, #213b45, #20373f 45%, #1b3047 70%, #1b2a48); color: #fff; }
.start { width: 25px; display: grid; place-items: center; }
.start svg { width: 9px; height: 9px; }
.tsearch { width: 179px; background: #f2f2f2; color: #333; display: flex; align-items: center; gap: 6px; padding-left: 6px; font-size: 7px; }
.tsearch svg { width: 9px; height: 9px; color: #333; }
.tsearch input { flex: 1; }
.sys { width: 51px; display: grid; grid-template-columns: 1fr 1fr; }
.apps { width: 179px; display: grid; grid-template-columns: repeat(7, 1fr); column-gap: 2px; }
.sys button, .apps button { display: grid; place-items: center; }
.sys svg { width: 9px; height: 9px; color: #ddd; }
.apps svg { width: 12px; height: 12px; }
.apps .run { border-bottom: 1px solid #76b9ed; }
.apps .cur { background: #4a5a6b; }
.apps .wx { background: #12b312; margin-right: 3px; }
.aeicon { width: 12px; height: 12px; background: #1f0a4f; border: 1px solid #9d80e8; color: #c4b0fa; font: bold 7px/10px "Open Sans", sans-serif; }
.tray { margin-left: auto; display: flex; align-items: center; gap: 4px; padding-right: 9px; font-size: 8px; }
.tray svg { color: #fff; width: 9px; height: 9px; }
.caret { width: 5px; height: 5px; border: solid #fff; border-width: 1px 0 0 1px; transform: rotate(45deg); margin: 3px 3px 0 0; }
.tray time { font: 7px/10px "Open Sans", sans-serif; text-align: center; width: 38px; }
.notif { position: relative; margin-left: 4px; }
.notif svg { width: 13px; height: 13px; }
.notif span { position: absolute; right: 2px; bottom: 0; font-size: 6px; line-height: 8px; }

/* watermark over the workspace */
.watermark { position: absolute; right: 46px; bottom: 23px; width: 186px; height: 90px; pointer-events: none; overflow: visible; }
.wm-bai { font: bold 40px "Liberation Sans", sans-serif; }
.wm-du { font: bold 23px "Liberation Sans", sans-serif; fill: #323232; }
.wm-cjk { font: 900 30px "Noto Sans CJK SC", sans-serif; }
.wm-url { font: 20px "Noto Sans", sans-serif; fill: #e2e2e2; }
```
